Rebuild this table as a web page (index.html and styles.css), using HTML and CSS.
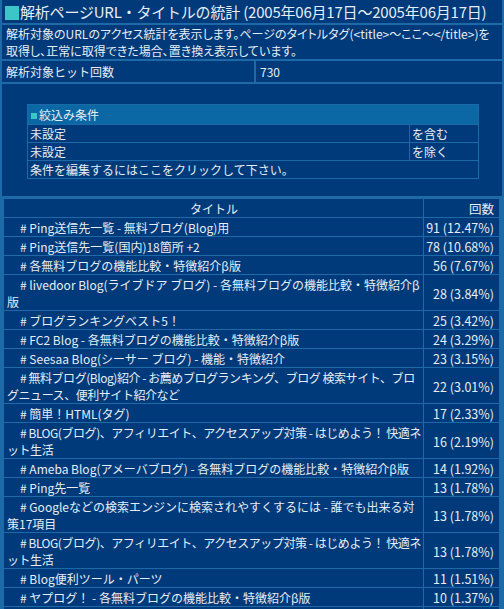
FILE: index.html
```html
<!DOCTYPE html>
<html lang="ja">
<head>
<meta charset="utf-8">
<title>解析ページURL・タイトルの統計</title>
<link rel="stylesheet" href="styles.css">
</head>
<body>
<table class="frame">
  <tr><td colspan="2" class="title"><span class="sq"></span>解析ページURL・タイトルの統計 (2005年06月17日～2005年06月17日)</td></tr>
  <tr><td colspan="2" class="desc">解析対象のURLのアクセス統計を表示します。ページのタイトルタグ(&lt;title&gt;～ここ～&lt;/title&gt;)を<br>取得し、正常に取得できた場合、置き換え表示しています。</td></tr>
  <tr><td class="label">解析対象ヒット回数</td><td class="value">730</td></tr>
  <tr><td colspan="2" class="filter-cell">
    <table class="filter">
      <tr><th colspan="2"><span class="sq-s"></span>絞込み条件</th></tr>
      <tr><td>未設定</td><td class="op">を含む</td></tr>
      <tr><td>未設定</td><td class="op">を除く</td></tr>
      <tr><td colspan="2">条件を編集するにはここをクリックして下さい。</td></tr>
    </table>
  </td></tr>
</table>
<table class="stats">
  <tr class="head"><td class="t c">タイトル</td><td class="n">回数</td></tr>
  <tr><td class="t"># Ping送信先一覧 - 無料ブログ(Blog)用</td><td class="n">91 (12.47%)</td></tr>
  <tr><td class="t"># Ping送信先一覧(国内)18箇所 +2</td><td class="n">78 (10.68%)</td></tr>
  <tr><td class="t"># 各無料ブログの機能比較・特徴紹介β版</td><td class="n">56 (7.67%)</td></tr>
  <tr><td class="t"># livedoor Blog(ライブドア ブログ) - 各無料ブログの機能比較・特徴紹介β版</td><td class="n">28 (3.84%)</td></tr>
  <tr><td class="t"># ブログランキングベスト5！</td><td class="n">25 (3.42%)</td></tr>
  <tr><td class="t"># FC2 Blog - 各無料ブログの機能比較・特徴紹介β版</td><td class="n">24 (3.29%)</td></tr>
  <tr><td class="t"># Seesaa Blog(シーサー ブログ) - 機能・特徴紹介</td><td class="n">23 (3.15%)</td></tr>
  <tr><td class="t kana"># 無料ブログ(Blog)紹介 - お薦めブログランキング、ブログ 検索サイト、ブログニュース、便利サイト紹介など</td><td class="n">22 (3.01%)</td></tr>
  <tr><td class="t"># 簡単！HTML(タグ)</td><td class="n">17 (2.33%)</td></tr>
  <tr><td class="t kana"># BLOG(ブログ)、アフィリエイト、アクセスアップ対策 - はじめよう！ 快適ネット生活</td><td class="n">16 (2.19%)</td></tr>
  <tr><td class="t"># Ameba Blog(アメーバブログ) - 各無料ブログの機能比較・特徴紹介β版</td><td class="n">14 (1.92%)</td></tr>
  <tr><td class="t"># Ping先一覧</td><td class="n">13 (1.78%)</td></tr>
  <tr><td class="t"># Googleなどの検索エンジンに検索されやすくするには - 誰でも出来る対策17項目</td><td class="n">13 (1.78%)</td></tr>
  <tr><td class="t kana"># BLOG(ブログ)、アフィリエイト、アクセスアップ対策 - はじめよう！ 快適ネット生活</td><td class="n">13 (1.78%)</td></tr>
  <tr><td class="t"># Blog便利ツール・パーツ</td><td class="n">11 (1.51%)</td></tr>
  <tr><td class="t"># ヤプログ！ - 各無料ブログの機能比較・特徴紹介β版</td><td class="n">10 (1.37%)</td></tr>
  <tr class="more"><td class="t"></td><td class="n"></td></tr>
</table>
</body>
</html>
```

FILE: styles.css
```css
html, body {
  margin: 0;
  padding: 0;
  background: #1c6aa8;
  color: #e6edf5;
  font-family: "Noto Sans CJK JP", "Noto Sans", sans-serif;
  font-size: 12px;
  line-height: 17px;
}

table {
  border-collapse: separate;
  font-size: 12px;
}

td, th {
  padding: 0;
  background: #003a7a;
  font-weight: normal;
  text-align: left;
  vertical-align: middle;
}

.frame {
  width: 504px;
  border-spacing: 2px;
  margin: -2px 0 0;
}

.title {
  height: 23px;
  font-size: 15px;
  padding: 0 2px 0 3px;
  white-space: nowrap;
  letter-spacing: -0.2px;
}

.sq {
  display: inline-block;
  width: 14px;
  height: 14px;
  background: #3cc6c8;
  margin-right: 1px;
  vertical-align: -2px;
}

.desc {
  padding: 0 4px;
  height: 33px;
  font-feature-settings: "palt";
  white-space: nowrap;
}

.label {
  width: 244px;
  padding: 0 4px;
  height: 21px;
}

.value {
  padding: 0 4px;
}

.filter-cell {
  padding: 20px 23px 17px 25px;
}

.filter {
  width: 452px;
  border-spacing: 1px;
  background: #1a6aa8;
}

.filter th {
  background: #0b68a4;
  height: 19px;
  padding: 0 3px;
}

.filter td {
  height: 17px;
  padding: 0 2px;
}

.filter td.op {
  width: 64px;
}

.sq-s {
  display: inline-block;
  width: 6px;
  height: 6px;
  background: #3cc6c8;
  margin-right: 2px;
  vertical-align: 1px;
}

.stats {
  width: 497px;
  margin: 0 0 0 3px;
  border-spacing: 1px;
}

.stats td {
  padding-top: 1px;
}

.stats .more td {
  height: 17px;
}

.stats .t {
  padding-left: 3px;
  padding-right: 2px;
  text-indent: 13px;
}

.stats .t.kana {
  letter-spacing: -0.45px;
}

.stats .t.c {
  text-align: center;
  text-indent: 0;
}

.stats .n {
  width: 63px;
  text-align: right;
  white-space: nowrap;
  padding-left: 2px;
  padding-right: 5px;
  font-size: 12.5px;
}
```
